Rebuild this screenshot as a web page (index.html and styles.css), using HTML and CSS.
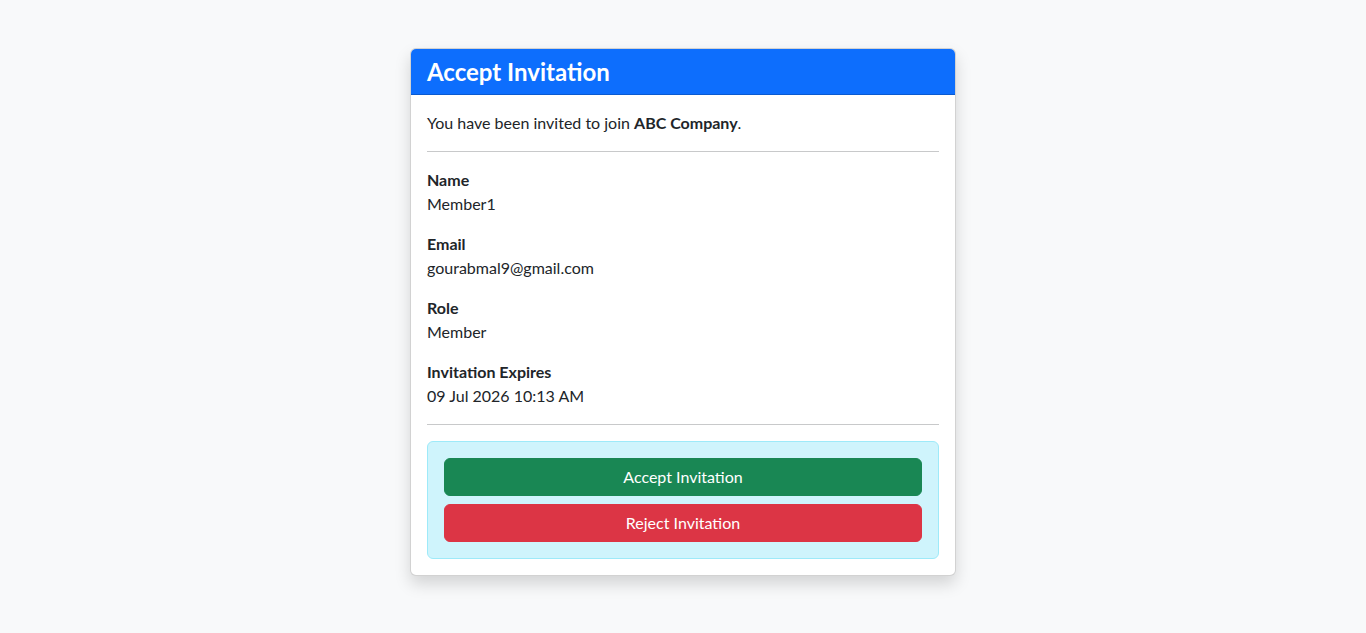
FILE: index.html
```html
<!DOCTYPE html>
<html lang="en">
<head>
    <meta charset="UTF-8">
    <meta name="viewport" content="width=device-width, initial-scale=1.0">
    <title>Accept Invitation</title>
    <link rel="stylesheet" href="styles.css">
</head>
<body>
    <div class="container">
        <div class="card">
            <div class="card-header">
                <h4>Accept Invitation</h4>
            </div>
            <div class="card-body">
                <p class="intro">You have been invited to join <strong>ABC Company</strong>.</p>
                <hr>

                <div class="field">
                    <div class="label">Name</div>
                    <div class="value">Member1</div>
                </div>
                <div class="field">
                    <div class="label">Email</div>
                    <div class="value">gourabmal9@gmail.com</div>
                </div>
                <div class="field">
                    <div class="label">Role</div>
                    <div class="value">Member</div>
                </div>
                <div class="field last">
                    <div class="label">Invitation Expires</div>
                    <div class="value">09 Jul 2026 10:13 AM</div>
                </div>
                <hr>

                <div class="actions">
                    <button class="btn btn-success">Accept Invitation</button>
                    <button class="btn btn-danger">Reject Invitation</button>
                </div>
            </div>
        </div>
    </div>
</body>
</html>
```

FILE: styles.css
```css
:root {
    --primary: #0d6efd;
    --success: #198754;
    --danger: #dc3545;
    --dark: #212529;
    --light: #f8f9fa;
}

* {
    margin: 0;
    padding: 0;
    box-sizing: border-box;
}

html,
body {
    min-height: 100%;
}

body {
    font-family: "Lato", "Noto Sans", sans-serif;
    font-size: 16px;
    line-height: 24px;
    background-color: var(--light);
    color: var(--dark);
    padding: 48px 0;
}

.container {
    width: 546px;
    margin: 0 auto;
}

.card {
    background-color: white;
    border: 1px solid rgba(0, 0, 0, 0.175);
    border-radius: 6px;
    box-shadow: 0 8px 16px rgba(0, 0, 0, 0.15);
    overflow: hidden;
}

.card-header {
    background-color: var(--primary);
    color: white;
    padding: 9px 16px 8px;
    border-bottom: 1px solid rgba(0, 0, 0, 0.175);
}

.card-header h4 {
    font-size: 24px;
    line-height: 28px;
    font-weight: 700;
}

.card-body {
    padding: 16px;
}

.intro {
    margin-bottom: 16px;
}

strong {
    font-weight: 700;
}

hr {
    border: none;
    border-top: 1px solid #c8c9ca;
    margin: 16px 0;
}

.field {
    margin-bottom: 16px;
}

.field.last {
    margin-bottom: 0;
}

.label {
    font-weight: 700;
}

.actions {
    display: flex;
    flex-direction: column;
    gap: 8px;
    padding: 16px;
    background-color: #cff4fc;
    border: 1px solid #9eeaf9;
    border-radius: 6px;
}

.btn {
    width: 100%;
    padding: 6px 12px;
    border: 1px solid transparent;
    border-radius: 6px;
    font-family: inherit;
    font-size: 16px;
    line-height: 24px;
    color: white;
    cursor: pointer;
}

.btn-success {
    background-color: var(--success);
    border-color: var(--success);
}

.btn-danger {
    background-color: var(--danger);
    border-color: var(--danger);
}
```
